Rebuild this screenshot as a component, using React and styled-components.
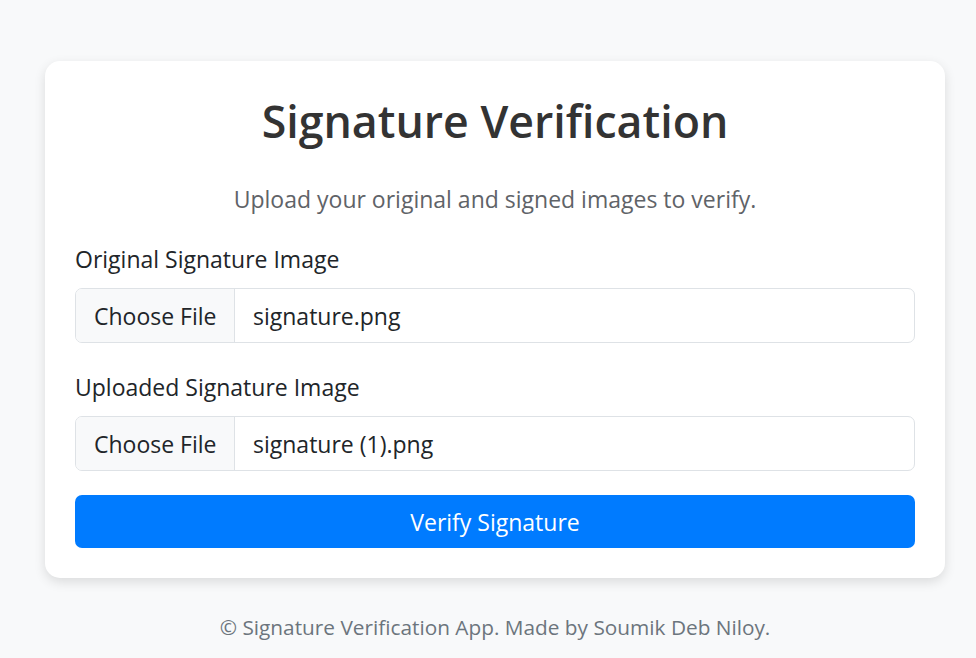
import React from "react";
import styled, { createGlobalStyle } from "styled-components";

const Global = createGlobalStyle`
  html, body { margin: 0; padding: 0; background: #f8f9fa; }
  body { font-family: "Open Sans", "Noto Sans", sans-serif; color: #212529; }
  * { box-sizing: border-box; }
`;

const Page = styled.div`
  min-height: 658px;
  padding: 61px 31px 0 45px;
`;

const Card = styled.div`
  background: #fff;
  border-radius: 15px;
  box-shadow: 0 4px 12px rgba(0, 0, 0, 0.12);
  padding: 30px 30px 30px;
  display: flex;
  flex-direction: column;
`;

const Title = styled.h1`
  margin: 0;
  font-size: 44.7px;
  line-height: 60px;
  font-weight: 600;
  text-align: center;
  color: #333;
`;

const Subtitle = styled.p`
  margin: 33px 0 0;
  font-size: 23px;
  line-height: 30px;
  text-align: center;
  color: #5f6368;
`;

const Field = styled.div`
  display: flex;
  flex-direction: column;
  margin-top: ${(p) => p.$top}px;
`;

const Label = styled.label`
  font-size: 23px;
  line-height: 30px;
  color: #212529;
  margin-bottom: 14px;
`;

const FileBox = styled.div`
  display: flex;
  height: 55px;
  border: 1px solid #dee2e6;
  border-radius: 7px;
  overflow: hidden;
  background: #fff;
`;

const ChooseBtn = styled.span`
  display: flex;
  align-items: center;
  padding: 0 18px;
  width: 159px;
  background: #f8f9fa;
  border-right: 1px solid #dee2e6;
  font-size: 23px;
  white-space: nowrap;
  color: #212529;
`;

const FileName = styled.span`
  display: flex;
  align-items: center;
  padding: 0 18px;
  font-size: 23px;
  color: #212529;
`;

const Submit = styled.button`
  margin-top: 24px;
  height: 53px;
  border: none;
  border-radius: 7px;
  background: #007bff;
  color: #fff;
  font-family: inherit;
  font-size: 23px;
  padding-top: 2px;
  cursor: pointer;
`;

const Footer = styled.p`
  margin: 34px 0 0;
  font-size: 20.8px;
  line-height: 30px;
  text-align: center;
  color: #6c757d;
`;

export default function App() {
  return (
    <>
      <Global />
      <Page>
        <Card>
          <Title>Signature Verification</Title>
          <Subtitle>Upload your original and signed images to verify.</Subtitle>
          <Field $top={30}>
            <Label>Original Signature Image</Label>
            <FileBox>
              <ChooseBtn>Choose File</ChooseBtn>
              <FileName>signature.png</FileName>
            </FileBox>
          </Field>
          <Field $top={29}>
            <Label>Uploaded Signature Image</Label>
            <FileBox>
              <ChooseBtn>Choose File</ChooseBtn>
              <FileName>signature (1).png</FileName>
            </FileBox>
          </Field>
          <Submit>Verify Signature</Submit>
        </Card>
        <Footer>© Signature Verification App. Made by Soumik Deb Niloy.</Footer>
      </Page>
    </>
  );
}
